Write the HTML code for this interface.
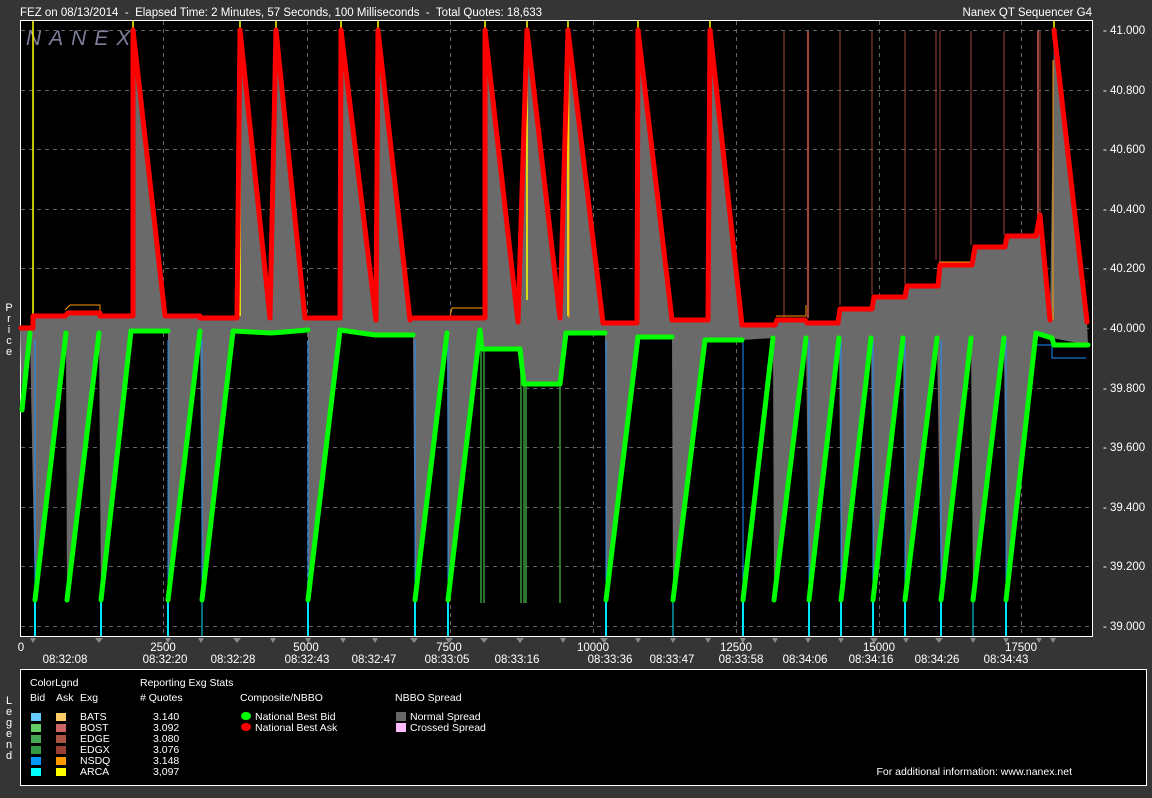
<!DOCTYPE html>
<html><head><meta charset="utf-8"><style>
html,body{margin:0;padding:0;background:#353535;}
svg{display:block;font-family:"Liberation Sans",sans-serif;}
</style></head><body>
<svg width="1152" height="798" viewBox="0 0 1152 798" xmlns="http://www.w3.org/2000/svg">
<rect width="1152" height="798" fill="#353535"/>
<text x="20" y="16" fill="#fff" font-size="11.5" xml:space="preserve">FEZ on 08/13/2014  -  Elapsed Time: 2 Minutes, 57 Seconds, 100 Milliseconds  -  Total Quotes: 18,633</text>
<text x="1092" y="16" fill="#fff" font-size="11.5" text-anchor="end">Nanex QT Sequencer G4</text>
<rect x="20.5" y="20.5" width="1072" height="616" fill="#000" stroke="#fff"/>
<g stroke="#666" stroke-dasharray="4,4" stroke-width="1">
<line x1="21" x2="1092" y1="30.5" y2="30.5"/><line x1="21" x2="1092" y1="90.5" y2="90.5"/><line x1="21" x2="1092" y1="149.5" y2="149.5"/><line x1="21" x2="1092" y1="209.5" y2="209.5"/><line x1="21" x2="1092" y1="268.5" y2="268.5"/><line x1="21" x2="1092" y1="328.5" y2="328.5"/><line x1="21" x2="1092" y1="388.5" y2="388.5"/><line x1="21" x2="1092" y1="447.5" y2="447.5"/><line x1="21" x2="1092" y1="507.5" y2="507.5"/><line x1="21" x2="1092" y1="566.5" y2="566.5"/><line x1="21" x2="1092" y1="626.5" y2="626.5"/>
<line x1="163.5" x2="163.5" y1="21" y2="636"/><line x1="307.5" x2="307.5" y1="21" y2="636"/><line x1="450.5" x2="450.5" y1="21" y2="636"/><line x1="593.5" x2="593.5" y1="21" y2="636"/><line x1="736.5" x2="736.5" y1="21" y2="636"/><line x1="879.5" x2="879.5" y1="21" y2="636"/><line x1="1021.5" x2="1021.5" y1="21" y2="636"/>
</g>
<text x="26" y="45" fill="#7d7d9c" font-size="21" font-style="italic" letter-spacing="8">NANEX</text>
<polygon fill="#6a6a6a" points="20,328 33,328 33,316 65,316 68,313 100,313 100,316 133,316 133,30 165,316 200,316 200,318 237,318 240,30 270,318 276,30 305,318 340,318 341,30 376,320 378,30 410,320 412,318 485,318 485,30 518,322 527,30 560,318 568,30 603,323 637,323 638,30 672,320 708,320 710,30 742,325 775,325 777,320 805,320 807,323 838,323 840,309 872,309 874,297 905,297 907,286 938,286 940,265 972,265 975,247 1005,247 1007,236 1036,236 1040,215 1050,320 1054,30 1087,322 1088,345 1052,338 1036,333 1006,600 1004,338 973,600 971,338 941,600 937,338 905,600 903,338 873,600 871,338 841,600 839,338 809,600 806,338 774,600 773,338 742,340 705,340 673,600 672,337 638,337 606,600 605,333 566,333 560,384 524,384 520,349 482,349 480,330 448,600 447,333 415,600 413,335 375,335 340,330 308,600 308,330 272,333 233,331 202,600 200,331 168,600 168,331 131,331 101,600 99,333 67,600 66,333 35,600 30,333 22,410"/>
<g stroke="#00e5ff" stroke-width="2">
<line x1="35" y1="600" x2="35" y2="636"/><line x1="101" y1="600" x2="101" y2="636"/><line x1="168" y1="600" x2="168" y2="636"/><line x1="202" y1="600" x2="202" y2="636" stroke-width="1"/><line x1="308" y1="600" x2="308" y2="636"/><line x1="415" y1="600" x2="415" y2="636"/><line x1="448" y1="600" x2="448" y2="636"/><line x1="606" y1="600" x2="606" y2="636"/><line x1="673" y1="600" x2="673" y2="636" stroke-width="1"/><line x1="743" y1="600" x2="743" y2="636"/><line x1="809" y1="600" x2="809" y2="636"/><line x1="841" y1="600" x2="841" y2="636"/><line x1="873" y1="600" x2="873" y2="636"/><line x1="905" y1="600" x2="905" y2="636"/><line x1="941" y1="600" x2="941" y2="636"/><line x1="973" y1="600" x2="973" y2="636" stroke-width="1"/><line x1="1006" y1="600" x2="1006" y2="636"/>
</g>
<g stroke="#1e90ff" stroke-width="1">
<line x1="35" y1="340" x2="35" y2="600"/><line x1="168" y1="340" x2="168" y2="600"/><line x1="202" y1="340" x2="202" y2="600"/><line x1="308" y1="340" x2="308" y2="600"/><line x1="415" y1="340" x2="415" y2="600"/><line x1="448" y1="340" x2="448" y2="600"/><line x1="606" y1="340" x2="606" y2="600"/><line x1="743" y1="340" x2="743" y2="600"/><line x1="809" y1="340" x2="809" y2="600"/><line x1="841" y1="340" x2="841" y2="600"/><line x1="873" y1="340" x2="873" y2="600"/><line x1="905" y1="340" x2="905" y2="600"/><line x1="941" y1="340" x2="941" y2="600"/><line x1="1006" y1="340" x2="1006" y2="600"/>
<polyline fill="none" points="1036,345 1052,345 1052,358 1086,358"/>
</g>
<g stroke="#3a9a3a" stroke-width="1.5">
<line x1="481" y1="350" x2="481" y2="603"/><line x1="484" y1="350" x2="484" y2="603"/><line x1="521" y1="370" x2="521" y2="603"/><line x1="524" y1="370" x2="524" y2="603"/><line x1="526" y1="380" x2="526" y2="603"/><line x1="560" y1="384" x2="560" y2="603"/>
</g>
<g stroke="#ffff00" stroke-width="1.5">
<line x1="33" y1="21" x2="33" y2="328"/><line x1="133" y1="21" x2="133" y2="30"/><line x1="240" y1="21" x2="240" y2="316"/><line x1="276" y1="21" x2="276" y2="30"/><line x1="341" y1="21" x2="341" y2="316"/><line x1="378" y1="21" x2="378" y2="30"/><line x1="485" y1="21" x2="485" y2="30"/><line x1="527" y1="21" x2="527" y2="300"/><line x1="568" y1="21" x2="568" y2="316"/><line x1="638" y1="21" x2="638" y2="30"/><line x1="710" y1="21" x2="710" y2="30"/><line x1="1054" y1="21" x2="1054" y2="30"/>
</g>
<g stroke="#ff9900" stroke-width="1">
<line x1="239" y1="60" x2="239" y2="316"/><line x1="342" y1="60" x2="342" y2="316"/><line x1="569" y1="60" x2="569" y2="318"/><line x1="1053" y1="60" x2="1053" y2="320"/>
<polyline fill="none" points="65,310 70,305 100,305 100,312"/><polyline fill="none" points="450,316 452,308 485,308"/><polyline fill="none" points="939,262 972,262"/><polyline fill="none" points="776,316 806,316 806,305"/>
</g>
<g stroke="#a0453a" stroke-width="1">
<line x1="784" y1="31" x2="784" y2="318"/><line x1="808" y1="31" x2="808" y2="318" stroke-width="2"/><line x1="840" y1="31" x2="840" y2="305"/><line x1="872" y1="31" x2="872" y2="295"/><line x1="905" y1="31" x2="905" y2="284"/><line x1="936" y1="31" x2="936" y2="260"/><line x1="940" y1="31" x2="940" y2="262"/><line x1="971" y1="31" x2="971" y2="245"/><line x1="1004" y1="31" x2="1004" y2="235"/><line x1="1038" y1="31" x2="1038" y2="215" stroke-width="2"/><line x1="1040" y1="31" x2="1040" y2="215"/>
</g>
<polyline fill="none" stroke="#ff0000" stroke-width="5" stroke-linejoin="round" stroke-linecap="round" points="21,328 33,328 33,316 65,316 68,313 100,313 100,316 133,316 133,30 165,316 200,316 200,318 237,318 240,30 270,318 276,30 305,318 340,318 341,30 376,320 378,30 410,320 412,318 485,318 485,30 518,322 527,30 560,318 568,30 603,323 637,323 638,30 672,320 708,320 710,30 742,325 775,325 777,320 805,320 807,323 838,323 840,309 872,309 874,297 905,297 907,286 938,286 940,265 972,265 975,247 1005,247 1007,236 1036,236 1040,215 1050,320"/>
<polyline fill="none" stroke="#ff0000" stroke-width="5" stroke-linecap="round" points="1054,30 1087,322"/>
<g fill="none" stroke="#00ff00" stroke-width="5" stroke-linejoin="round" stroke-linecap="round">
<polyline points="22,410 30,333"/><polyline points="35,600 66,333"/><polyline points="67,600 99,333"/><polyline points="101,600 131,331 168,331"/><polyline points="168,600 200,331"/><polyline points="202,600 233,331 272,333 308,330"/><polyline points="308,600 340,330 375,335 413,335"/><polyline points="415,600 447,333"/><polyline points="448,600 480,330 482,349 520,349 524,384 560,384 566,333 605,333"/><polyline points="606,600 638,337 672,337"/><polyline points="673,600 705,340 742,340"/><polyline points="743,600 773,338"/><polyline points="774,600 806,338"/><polyline points="809,600 839,338"/><polyline points="841,600 871,338"/><polyline points="873,600 903,338"/><polyline points="905,600 937,338"/><polyline points="941,600 971,338"/><polyline points="973,600 1004,338"/><polyline points="1006,600 1036,333 1052,338 1054,345 1088,345"/>
</g>
<g fill="#fff" font-size="11.5">
<text x="1103" y="34">- 41.000</text><text x="1103" y="94">- 40.800</text><text x="1103" y="153">- 40.600</text><text x="1103" y="213">- 40.400</text><text x="1103" y="272">- 40.200</text><text x="1103" y="332">- 40.000</text><text x="1103" y="392">- 39.800</text><text x="1103" y="451">- 39.600</text><text x="1103" y="511">- 39.400</text><text x="1103" y="570">- 39.200</text><text x="1103" y="630">- 39.000</text>
</g>
<g fill="#fff" font-size="11" text-anchor="middle">
<text x="9" y="311">P</text><text x="9" y="322">r</text><text x="9" y="333">i</text><text x="9" y="344">c</text><text x="9" y="355">e</text>
<text x="9" y="704">L</text><text x="9" y="715">e</text><text x="9" y="726">g</text><text x="9" y="737">e</text><text x="9" y="748">n</text><text x="9" y="759">d</text>
</g>
<g fill="#888" stroke="none">
<path d="M30,638 l3,5 l3,-5z M95,638 l4,5 l4,-5z M165,638 l3,5 l3,-5z M198,638 l3,5 l3,-5z M233,638 l4,5 l4,-5z M270,638 l3,5 l3,-5z M305,638 l3,5 l3,-5z M340,638 l3,5 l3,-5z M372,638 l3,5 l3,-5z M410,638 l4,5 l4,-5z M445,638 l4,5 l4,-5z M480,638 l4,5 l4,-5z M516,638 l4,5 l4,-5z M560,638 l3,5 l3,-5z M600,638 l4,5 l4,-5z M635,638 l3,5 l3,-5z M670,638 l3,5 l3,-5z M705,638 l3,5 l3,-5z M740,638 l3,5 l3,-5z M772,638 l3,5 l3,-5z M805,638 l3,5 l3,-5z M838,638 l3,5 l3,-5z M870,638 l4,5 l4,-5z M903,638 l3,5 l3,-5z M935,638 l4,5 l4,-5z M970,638 l3,5 l3,-5z M1003,638 l3,5 l3,-5z M1036,638 l3,5 l3,-5z M1050,638 l3,5 l3,-5z"/>
</g>
<g fill="#fff" font-size="11.5" text-anchor="middle">
<text x="21" y="651">0</text><text x="163" y="651">2500</text><text x="306" y="651">5000</text><text x="449" y="651">7500</text><text x="593" y="651">10000</text><text x="736" y="651">12500</text><text x="879" y="651">15000</text><text x="1021" y="651">17500</text>
<text x="65" y="663">08:32:08</text><text x="165" y="663">08:32:20</text><text x="233" y="663">08:32:28</text><text x="307" y="663">08:32:43</text><text x="374" y="663">08:32:47</text><text x="447" y="663">08:33:05</text><text x="517" y="663">08:33:16</text><text x="610" y="663">08:33:36</text><text x="672" y="663">08:33:47</text><text x="741" y="663">08:33:58</text><text x="805" y="663">08:34:06</text><text x="871" y="663">08:34:16</text><text x="937" y="663">08:34:26</text><text x="1006" y="663">08:34:43</text>
</g>
<rect x="20.5" y="669.5" width="1126" height="116" fill="#000" stroke="#fff"/>
<g fill="#fff" font-size="10.5">
<text x="30" y="686">ColorLgnd</text><text x="140" y="686">Reporting Exg Stats</text>
<text x="30" y="701">Bid</text><text x="56" y="701">Ask</text><text x="80" y="701">Exg</text><text x="140" y="701">#  Quotes</text><text x="240" y="701">Composite/NBBO</text><text x="395" y="701">NBBO Spread</text>
<text x="80" y="720">BATS</text><text x="80" y="731">BOST</text><text x="80" y="742">EDGE</text><text x="80" y="753">EDGX</text><text x="80" y="764">NSDQ</text><text x="80" y="775">ARCA</text>
<text x="153" y="720">3.140</text><text x="153" y="731">3.092</text><text x="153" y="742">3.080</text><text x="153" y="753">3.076</text><text x="153" y="764">3.148</text><text x="153" y="775">3,097</text>
<text x="255" y="720">National Best Bid</text><text x="255" y="731">National Best Ask</text>
<text x="410" y="720">Normal Spread</text><text x="410" y="731">Crossed Spread</text>
<text x="1072" y="775" text-anchor="end">For additional information: www.nanex.net</text>
</g>
<rect x="31" y="713" width="10" height="8" fill="#66ccff"/><rect x="56" y="713" width="10" height="8" fill="#ffcc66"/>
<rect x="31" y="724" width="10" height="8" fill="#66cc66"/><rect x="56" y="724" width="10" height="8" fill="#cc6666"/>
<rect x="31" y="735" width="10" height="8" fill="#44aa55"/><rect x="56" y="735" width="10" height="8" fill="#aa5544"/>
<rect x="31" y="746" width="10" height="8" fill="#339944"/><rect x="56" y="746" width="10" height="8" fill="#993f33"/>
<rect x="31" y="757" width="10" height="8" fill="#0099ff"/><rect x="56" y="757" width="10" height="8" fill="#ff9900"/>
<rect x="31" y="768" width="10" height="8" fill="#00ffff"/><rect x="56" y="768" width="10" height="8" fill="#ffff00"/>
<ellipse cx="246" cy="716" rx="5" ry="4" fill="#00ff00"/><ellipse cx="246" cy="727" rx="5" ry="4" fill="#ff0000"/>
<rect x="396" y="712" width="10" height="9" fill="#666"/><rect x="396" y="723" width="10" height="9" fill="#ffbbff"/>
</svg>
</body></html>
